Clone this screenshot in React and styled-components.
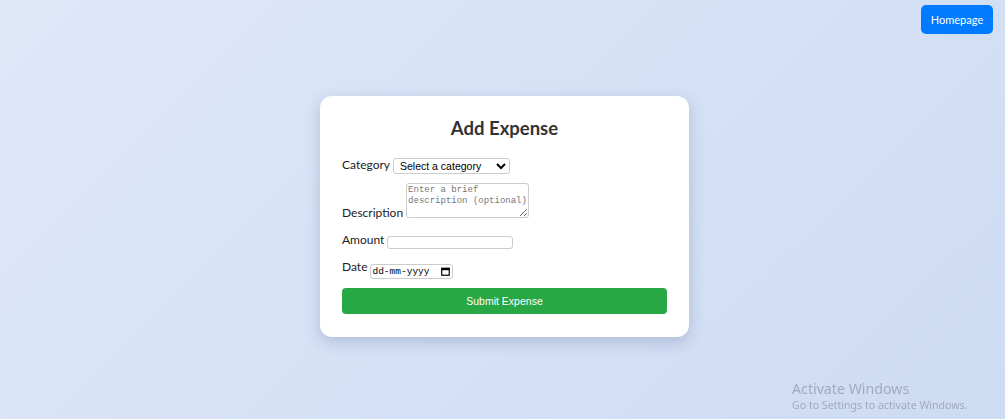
import React from "react";
import styled, { createGlobalStyle } from "styled-components";

const Global = createGlobalStyle`
  html, body { margin: 0; padding: 0; }
  body {
    font-family: "Segoe UI", Lato, "Noto Sans", sans-serif;
    background: linear-gradient(135deg, #dfe8f9 0%, #cddbf3 100%);
    min-height: 100vh;
    color: #333;
  }
`;

const Page = styled.div`
  min-height: 100vh;
  box-sizing: border-box;
  display: flex;
  align-items: center;
  justify-content: center;
  padding: 14px 0 0 4px;
`;

const HomeButton = styled.button`
  position: fixed;
  top: 5px;
  right: 12px;
  width: 72px;
  height: 29px;
  border: none;
  border-radius: 5px;
  background: #007bff;
  color: #fff;
  font-family: Lato, "Noto Sans", sans-serif;
  font-size: 11px;
  padding: 0;
  cursor: pointer;
`;

const Card = styled.div`
  width: 369px;
  box-sizing: border-box;
  background: #fff;
  border-radius: 12px;
  padding: 20px 22px 23px;
  box-shadow: 0 5px 16px rgba(40, 60, 110, 0.22);
`;

const Title = styled.h2`
  margin: 0 0 15px;
  text-align: center;
  font-size: 18.5px;
  line-height: 25px;
  font-weight: 700;
  color: #333;
`;

const Group = styled.div`
  margin-bottom: 9px;
  font-size: 12px;
  line-height: 18px;
`;

const Label = styled.label`
  margin-right: 3px;
  color: #222;
`;

const Select = styled.select`
  width: 117px;
  height: 16px;
  font-family: "Liberation Sans", Arial, sans-serif;
  font-size: 10.5px;
  border: 1px solid #ccc;
  border-radius: 3px;
  padding: 0 2px;
  background: #fff;
  color: #000;
  vertical-align: -1px;
`;

const TextArea = styled.textarea`
  width: 123px;
  height: 35px;
  box-sizing: border-box;
  font-family: "Liberation Mono", monospace;
  font-size: 9px;
  line-height: 11px;
  border: 1px solid #ccc;
  border-radius: 3px;
  padding: 1px 1px;
  vertical-align: -1px;
  &::placeholder { color: #777; }
`;

const Input = styled.input`
  width: 126px;
  height: 13px;
  box-sizing: border-box;
  border: 1px solid #ccc;
  border-radius: 3px;
  padding: 0 2px;
  font-size: 10px;
  vertical-align: -2px;
`;

const DateBox = styled.span`
  display: inline-flex;
  align-items: center;
  justify-content: space-between;
  width: 83px;
  height: 15px;
  box-sizing: border-box;
  border: 1px solid #ccc;
  border-radius: 3px;
  padding: 0 2px 0 1px;
  font-family: "Liberation Mono", monospace;
  font-size: 9.5px;
  color: #000;
  vertical-align: -3px;
  background: #fff;
`;

const SubmitButton = styled.button`
  display: block;
  width: 100%;
  height: 26px;
  margin-top: 7px;
  border: none;
  border-radius: 4px;
  background: #28a745;
  color: #fff;
  font-family: "Liberation Sans", Arial, sans-serif;
  font-size: 10.5px;
  cursor: pointer;
`;

const Watermark = styled.div`
  position: fixed;
  left: 792px;
  top: 379px;
  color: rgba(120, 130, 150, 0.55);
  font-family: "Noto Sans", sans-serif;
  pointer-events: none;
`;

const WmTitle = styled.div`
  font-size: 14.2px;
  line-height: 19px;
`;

const WmSub = styled.div`
  font-size: 10.6px;
  line-height: 15px;
`;

function CalendarIcon() {
  return (
    <svg width="9" height="9" viewBox="0 0 9 9">
      <rect x="0.75" y="1.25" width="7.5" height="7" fill="none" stroke="#000" strokeWidth="1.2" />
      <rect x="0.5" y="1" width="8" height="2.2" fill="#000" />
    </svg>
  );
}

export default function App() {
  return (
    <>
      <Global />
      <HomeButton>Homepage</HomeButton>
      <Page>
        <Card>
          <Title>Add Expense</Title>
          <form onSubmit={(e) => e.preventDefault()}>
            <Group>
              <Label>Category</Label>
              <Select defaultValue="">
                <option value="">Select a category</option>
                <option>Food</option>
                <option>Transport</option>
              </Select>
            </Group>
            <Group>
              <Label>Description</Label>
              <TextArea placeholder="Enter a brief description (optional)" />
            </Group>
            <Group>
              <Label>Amount</Label>
              <Input type="text" />
            </Group>
            <Group>
              <Label>Date</Label>
              <DateBox>
                <span>dd-mm-yyyy</span>
                <CalendarIcon />
              </DateBox>
            </Group>
            <SubmitButton type="submit">Submit Expense</SubmitButton>
          </form>
        </Card>
      </Page>
      <Watermark>
        <WmTitle>Activate Windows</WmTitle>
        <WmSub>Go to Settings to activate Windows.</WmSub>
      </Watermark>
    </>
  );
}
